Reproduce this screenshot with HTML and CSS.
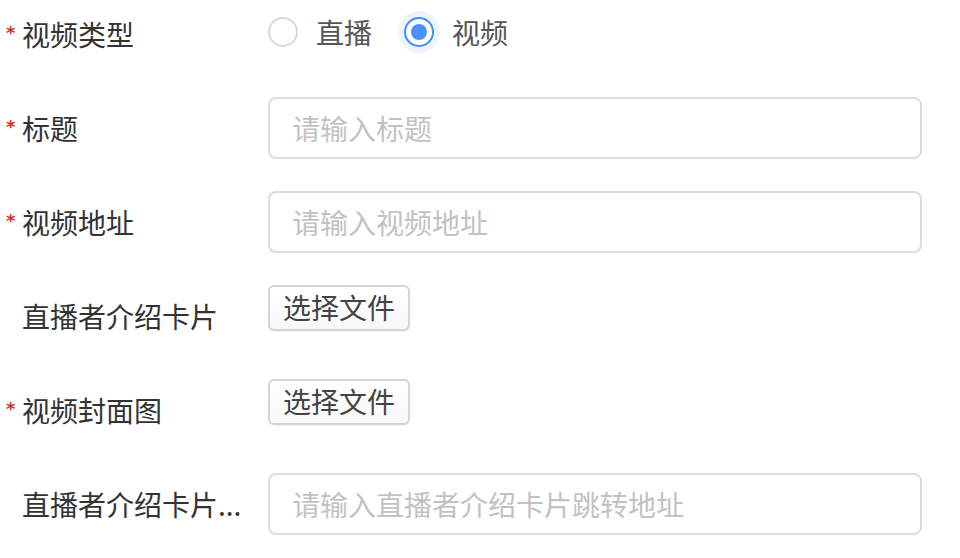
FILE: index.html
```html
<!DOCTYPE html>
<html lang="zh-CN">
<head>
<meta charset="utf-8">
<title>表单</title>
<link rel="stylesheet" href="styles.css">
</head>
<body>
<form class="form">
  <div class="row">
    <label class="label"><span class="req">*</span>视频类型</label>
    <div class="control radios">
      <span class="radio"><span class="dot"></span><span class="rtext">直播</span></span>
      <span class="radio checked"><span class="dot"></span><span class="rtext">视频</span></span>
    </div>
  </div>
  <div class="row">
    <label class="label"><span class="req">*</span>标题</label>
    <div class="control"><input class="input" type="text" placeholder="请输入标题"></div>
  </div>
  <div class="row">
    <label class="label"><span class="req">*</span>视频地址</label>
    <div class="control"><input class="input" type="text" placeholder="请输入视频地址"></div>
  </div>
  <div class="row">
    <label class="label"><span class="req"></span>直播者介绍卡片</label>
    <div class="control top"><span class="filebtn">选择文件</span></div>
  </div>
  <div class="row">
    <label class="label"><span class="req">*</span>视频封面图</label>
    <div class="control top"><span class="filebtn">选择文件</span></div>
  </div>
  <div class="row">
    <label class="label" title="直播者介绍卡片跳转地址"><span class="req"></span>直播者介绍卡片...</label>
    <div class="control"><input class="input" type="text" placeholder="请输入直播者介绍卡片跳转地址"></div>
  </div>
</form>
</body>
</html>
```
FILE: styles.css
```css
html, body {
  margin: 0;
  padding: 0;
  background: #fff;
}
body {
  font-family: "Noto Sans CJK SC", "Noto Sans", sans-serif;
  color: #333;
}
.form {
  display: flex;
  flex-direction: column;
  gap: 32px;
  padding-top: 3px;
}
.row {
  display: flex;
  height: 62px;
}
.label {
  width: 268px;
  flex: none;
  display: flex;
  align-items: center;
  font-size: 28px;
  line-height: 62px;
  color: #333;
  box-sizing: border-box;
  padding-right: 12px;
  white-space: nowrap;
}
.req {
  display: inline-block;
  width: 22px;
  flex: none;
  text-align: left;
  padding-left: 6px;
  box-sizing: border-box;
  color: #d0322d;
  font-family: "DejaVu Sans", sans-serif;
  font-weight: bold;
  font-size: 18px;
  line-height: 1;
  position: relative;
  top: -1px;
}
.control {
  width: 654px;
  display: flex;
  align-items: center;
}
.control.top {
  align-items: flex-start;
}
.radios {
  gap: 32px;
  margin-top: -4px;
}
.radio {
  display: inline-flex;
  align-items: center;
  gap: 18px;
  font-size: 28px;
  color: #555;
}
.dot {
  width: 30px;
  height: 30px;
  box-sizing: border-box;
  border: 2px solid #d9d9d9;
  border-radius: 50%;
  background: #fff;
  position: relative;
}
.radio.checked .dot {
  border-color: #3f8cf3;
  box-shadow: 0 0 0 6px #eef4fe;
}
.radio.checked .dot::after {
  content: "";
  position: absolute;
  left: 5px;
  top: 5px;
  width: 16px;
  height: 16px;
  border-radius: 50%;
  background: #4a90f5;
}
.input {
  width: 654px;
  height: 62px;
  box-sizing: border-box;
  border: 2px solid #dcdcdc;
  border-radius: 8px;
  padding: 0 22px;
  font-family: inherit;
  font-size: 28px;
  color: #333;
  outline: none;
  background: #fff;
}
.input::placeholder {
  color: #c2c2c2;
}
.filebtn {
  display: inline-block;
  height: 46px;
  box-sizing: border-box;
  padding: 0 13px;
  border: 2px solid #d4d4d4;
  border-radius: 6px;
  font-size: 28px;
  line-height: 40px;
  color: #444;
  background: linear-gradient(#fff, #f8f8f8);
  box-shadow: 0 1px 2px rgba(0,0,0,0.06);
}
```
